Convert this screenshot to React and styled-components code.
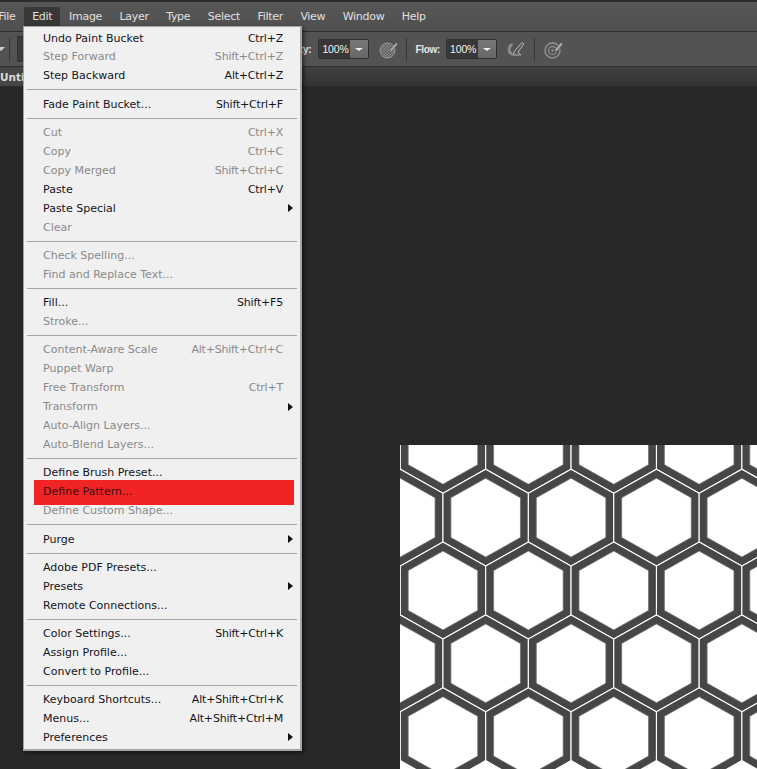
import React from 'react';
import styled, { createGlobalStyle } from 'styled-components';

const GlobalStyle = createGlobalStyle`
  html, body {
    margin: 0;
    padding: 0;
    background: #282828;
    overflow: hidden;
  }
`;

const Page = styled.div`
  position: relative;
  width: 757px;
  height: 769px;
  display: flex;
  flex-direction: column;
  overflow: hidden;
  background: #282828;
  font-family: 'DejaVu Sans', 'Noto Sans', sans-serif;
`;

const MenuBar = styled.div`
  height: 32px;
  box-sizing: border-box;
  flex: none;
  display: flex;
  align-items: flex-end;
  border-top: 2px solid #2c2c2c;
  border-bottom: 1px solid #2f2f2f;
  padding-bottom: 5px;
  background: linear-gradient(#565656, #505050);
`;

const BarItem = styled.div`
  height: 19px;
  line-height: 20px;
  padding: 0 ${(p) => (p.$active ? '8px' : '8.75px')};
  font-size: 11px;
  letter-spacing: -0.3px;
  color: #e0e0e0;
  background: ${(p) => (p.$active ? '#383838' : 'transparent')};
  border-radius: 2px 2px 0 0;
  &:first-child {
    margin-left: -10.5px;
  }
`;

const OptionsBar = styled.div`
  height: 35px;
  box-sizing: border-box;
  flex: none;
  display: flex;
  align-items: center;
  border-bottom: 1px solid #2e2e2e;
  background: #535353;
`;

const DownTip = styled.span`
  width: 0;
  height: 0;
  margin: 0 4px 0 -3px;
  border-left: 4px solid transparent;
  border-right: 4px solid transparent;
  border-top: 4px solid #d0d0d0;
`;

const Divider = styled.span`
  width: 1px;
  height: 23px;
  background: #363636;
  margin: ${(p) => p.$margin};
`;

const DarkBox = styled.span`
  width: 60px;
  height: 24px;
  background: #3c3c3c;
  border: 1px solid #333;
`;

const FieldLabel = styled.span`
  font-family: 'Liberation Sans', Arial, sans-serif;
  font-size: 10px;
  font-weight: 700;
  letter-spacing: -0.3px;
  color: #e6e6e6;
  margin: ${(p) => p.$margin};
`;

const Combo = styled.div`
  width: 51px;
  height: 20px;
  box-sizing: border-box;
  display: flex;
  border: 1px solid #2f2f2f;
  border-radius: 2px;
  overflow: hidden;
`;

const ComboValue = styled.span`
  flex: 1;
  background: #383838;
  color: #f2f2f2;
  font-family: 'Liberation Sans', Arial, sans-serif;
  font-size: 10.5px;
  letter-spacing: -0.15px;
  line-height: 19px;
  padding-left: 3px;
`;

const ComboButton = styled.span`
  width: 18px;
  background: linear-gradient(#777, #666);
  display: flex;
  align-items: center;
  justify-content: center;
  &::after {
    content: '';
    border-left: 4px solid transparent;
    border-right: 4px solid transparent;
    border-top: 3px solid #f0f0f0;
  }
`;

const ToolIcon = styled.svg`
  width: 20px;
  height: 20px;
  flex: none;
  margin: ${(p) => p.$margin};
`;

const TabBar = styled.div`
  height: 19px;
  flex: none;
  display: flex;
  background: linear-gradient(#404040, #343434);
`;

const DocTab = styled.div`
  width: 120px;
  font-size: 10.5px;
  font-weight: 700;
  line-height: 20px;
  color: #dcdcdc;
  background: #464646;
`;

const Workspace = styled.div`
  flex: 1;
  display: flex;
  justify-content: flex-end;
  align-items: flex-end;
  background: #282828;
`;

const PatternCanvas = styled.svg`
  display: block;
  width: 357px;
  height: 324px;
  background: #fff;
`;

const EditMenu = styled.div`
  position: absolute;
  left: 23px;
  top: 26px;
  width: 279px;
  box-sizing: border-box;
  padding: 2.5px 0 1.5px;
  background: #f0f0f0;
  border: 1px solid #a4a4a4;
  border-width: 1px 2px 2px 1px;
  box-shadow: 2px 2px 4px rgba(0, 0, 0, 0.55);
`;

const Row = styled.div`
  position: relative;
  height: 18.97px;
  line-height: 18.97px;
  display: grid;
  grid-template-columns: 1fr auto 10px;
  padding: 0 7px 0 19px;
  font-size: 11px;
  white-space: nowrap;
  color: ${(p) => (p.$disabled ? '#8a8a8a' : p.$marked ? '#3a1012' : '#14141c')};

  ${(p) =>
    p.$marked &&
    `
    &::before {
      content: '';
      position: absolute;
      left: 10px;
      right: 6px;
      top: -3px;
      bottom: -3px;
      background: #f12323;
    }
  `}
`;

const RowText = styled.span`
  position: relative;
`;

const ShortcutText = styled(RowText)`
  letter-spacing: -0.2px;
`;

const SubArrow = styled.span`
  justify-self: end;
  align-self: center;
  width: 0;
  height: 0;
  margin-top: -2px;
  border-top: 4px solid transparent;
  border-bottom: 4px solid transparent;
  border-left: 5px solid #111;
`;

const Separator = styled.div`
  height: 9.25px;
  box-sizing: border-box;
  margin: 0 3px;
  padding-top: 3px;
  &::after {
    content: '';
    display: block;
    height: 1px;
    background: #a6a6a6;
  }
`;

// d: disabled, m: marked in red, sub: has a submenu
const MENU_GROUPS = [
  [
    { t: 'Undo Paint Bucket', k: 'Ctrl+Z' },
    { t: 'Step Forward', k: 'Shift+Ctrl+Z', d: true },
    { t: 'Step Backward', k: 'Alt+Ctrl+Z' },
  ],
  [{ t: 'Fade Paint Bucket...', k: 'Shift+Ctrl+F' }],
  [
    { t: 'Cut', k: 'Ctrl+X', d: true },
    { t: 'Copy', k: 'Ctrl+C', d: true },
    { t: 'Copy Merged', k: 'Shift+Ctrl+C', d: true },
    { t: 'Paste', k: 'Ctrl+V' },
    { t: 'Paste Special', sub: true },
    { t: 'Clear', d: true },
  ],
  [
    { t: 'Check Spelling...', d: true },
    { t: 'Find and Replace Text...', d: true },
  ],
  [
    { t: 'Fill...', k: 'Shift+F5' },
    { t: 'Stroke...', d: true },
  ],
  [
    { t: 'Content-Aware Scale', k: 'Alt+Shift+Ctrl+C', d: true },
    { t: 'Puppet Warp', d: true },
    { t: 'Free Transform', k: 'Ctrl+T', d: true },
    { t: 'Transform', d: true, sub: true },
    { t: 'Auto-Align Layers...', d: true },
    { t: 'Auto-Blend Layers...', d: true },
  ],
  [
    { t: 'Define Brush Preset...' },
    { t: 'Define Pattern...', m: true },
    { t: 'Define Custom Shape...', d: true },
  ],
  [{ t: 'Purge', sub: true }],
  [
    { t: 'Adobe PDF Presets...' },
    { t: 'Presets', sub: true },
    { t: 'Remote Connections...' },
  ],
  [
    { t: 'Color Settings...', k: 'Shift+Ctrl+K' },
    { t: 'Assign Profile...' },
    { t: 'Convert to Profile...' },
  ],
  [
    { t: 'Keyboard Shortcuts...', k: 'Alt+Shift+Ctrl+K' },
    { t: 'Menus...', k: 'Alt+Shift+Ctrl+M' },
    { t: 'Preferences', sub: true },
  ],
];

const BAR_ITEMS = ['File', 'Edit', 'Image', 'Layer', 'Type', 'Select', 'Filter', 'View', 'Window', 'Help'];

function hexPoints(cx, cy, scale) {
  const w = 42.7 * scale;
  const h = 48.4 * scale;
  const s = 24.4 * scale;
  return [
    [cx, cy - h],
    [cx + w, cy - s],
    [cx + w, cy + s],
    [cx, cy + h],
    [cx - w, cy + s],
    [cx - w, cy - s],
  ]
    .map((p) => p.map((n) => n.toFixed(2)).join(','))
    .join(' ');
}

function HexPattern() {
  const cells = [];
  for (let row = 0; row < 5; row++) {
    const cy = row * 72.85 - 0.2;
    const start = row % 2 === 0 ? -42.43 : 0.27;
    for (let col = 0; col < 6; col++) {
      cells.push([start + col * 85.4, cy]);
    }
  }
  return (
    <PatternCanvas viewBox="0 0 357 324">
      {cells.map(([x, y]) => (
        <g key={`${x}-${y}`}>
          <polygon points={hexPoints(x, y, 1)} fill="#484644" stroke="#fff" strokeWidth="1.1" />
          <polygon points={hexPoints(x, y, 0.815)} fill="#fff" stroke="#6e6e6e" strokeWidth="0.8" />
        </g>
      ))}
    </PatternCanvas>
  );
}

function Brush({ color = '#a8a8a8' }) {
  return <path d="M10.5 11 L17 3.5 L19 5 L12.5 12.8 Z" fill={color} stroke="#444" strokeWidth="0.5" />;
}

function OpacityIcon({ margin }) {
  return (
    <ToolIcon viewBox="0 0 20 20" $margin={margin}>
      <defs>
        <pattern id="chk" width="3" height="3" patternUnits="userSpaceOnUse">
          <rect width="3" height="3" fill="#8a8a8a" />
          <rect width="1.5" height="1.5" fill="#5c5c5c" />
          <rect x="1.5" y="1.5" width="1.5" height="1.5" fill="#5c5c5c" />
        </pattern>
      </defs>
      <circle cx="8.5" cy="11.5" r="7.5" fill="url(#chk)" stroke="#9a9a9a" strokeWidth="1" />
      <Brush />
    </ToolIcon>
  );
}

function FlowIcon({ margin }) {
  return (
    <ToolIcon viewBox="0 0 20 20" $margin={margin}>
      <path d="M7.5 4 A6.8 6.8 0 0 0 7.5 17 L7.5 14 A4 4 0 0 1 7.5 7 Z" fill="#8e8e8e" />
      <path d="M9.5 12 L17 3.5 L19 5 L13 13 L16 16 L8 16 Z" fill="#5a5a5a" stroke="#b4b4b4" strokeWidth="1" />
    </ToolIcon>
  );
}

function TargetIcon({ margin }) {
  return (
    <ToolIcon viewBox="0 0 20 20" $margin={margin}>
      <circle cx="8.5" cy="11.5" r="7.5" fill="none" stroke="#929292" strokeWidth="1.4" />
      <circle cx="8.5" cy="11.5" r="4" fill="none" stroke="#8a8a8a" strokeWidth="1.3" />
      <circle cx="8.5" cy="11.5" r="1.2" fill="#929292" />
      <Brush color="#b0b0b0" />
    </ToolIcon>
  );
}

function App() {
  return (
    <Page>
      <GlobalStyle />
      <MenuBar>
        {BAR_ITEMS.map((name) => (
          <BarItem key={name} $active={name === 'Edit'}>
            {name}
          </BarItem>
        ))}
      </MenuBar>
      <OptionsBar>
        <DownTip />
        <Divider $margin="0 7px 0 0" />
        <DarkBox />
        <FieldLabel $margin="0 7px 0 auto">Opacity:</FieldLabel>
        <Combo>
          <ComboValue>100%</ComboValue>
          <ComboButton />
        </Combo>
        <OpacityIcon margin="0 0 0 10px" />
        <Divider $margin="0 8px 0 7px" />
        <FieldLabel $margin="0 6px 0 0">Flow:</FieldLabel>
        <Combo>
          <ComboValue>100%</ComboValue>
          <ComboButton />
        </Combo>
        <FlowIcon margin="0 0 0 8px" />
        <Divider $margin="0 9px 0 9px" />
        <TargetIcon margin="0 193px 0 0" />
      </OptionsBar>
      <TabBar>
        <DocTab>Untitled-1</DocTab>
      </TabBar>
      <Workspace>
        <HexPattern />
      </Workspace>
      <EditMenu>
        {MENU_GROUPS.map((group, i) => (
          <React.Fragment key={group[0].t}>
            {i > 0 && <Separator />}
            {group.map((item) => (
              <Row key={item.t} $disabled={item.d} $marked={item.m}>
                <RowText>{item.t}</RowText>
                <ShortcutText>{item.k}</ShortcutText>
                {item.sub ? <SubArrow /> : <span />}
              </Row>
            ))}
          </React.Fragment>
        ))}
      </EditMenu>
    </Page>
  );
}

export default App;
